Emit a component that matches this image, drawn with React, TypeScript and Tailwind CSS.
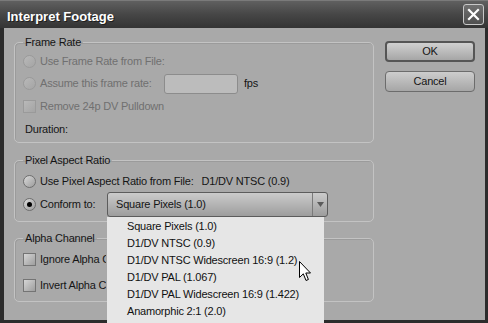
import React from "react";

const Radio = ({ checked = false, disabled = false }: { checked?: boolean; disabled?: boolean }) => (
  <span
    className={
      "w-[13px] h-[13px] rounded-full border flex items-center justify-center shrink-0 " +
      (disabled
        ? "border-[#9a9a9a] bg-linear-to-br from-[#b9b9b9] to-[#a4a4a4]"
        : "border-[#6e6e6e] bg-linear-to-br from-[#dadada] to-[#9c9c9c]")
    }
  >
    {checked && <span className="w-[5px] h-[5px] rounded-full bg-black" />}
  </span>
);

const Check = ({ disabled = false }: { disabled?: boolean }) => (
  <span
    className={
      "w-[13px] h-[13px] border shrink-0 " +
      (disabled
        ? "border-[#9a9a9a] bg-linear-to-br from-[#b9b9b9] to-[#a4a4a4]"
        : "border-[#747474] bg-linear-to-br from-[#d6d6d6] to-[#9e9e9e]")
    }
  />
);

const Group = ({ title, className, children }: { title: string; className: string; children: React.ReactNode }) => (
  <fieldset
    className={
      "border border-[#c3c3c3] rounded-[5px] px-[8px] shadow-[inset_1px_1px_0_#9b9b9b] " + className
    }
  >
    <legend className="px-[2px] leading-[14px] text-[#151515]">{title}</legend>
    {children}
  </fieldset>
);

const items = [
  "Square Pixels (1.0)",
  "D1/DV NTSC (0.9)",
  "D1/DV NTSC Widescreen 16:9 (1.2)",
  "D1/DV PAL (1.067)",
  "D1/DV PAL Widescreen 16:9 (1.422)",
  "Anamorphic 2:1 (2.0)",
];

export default function App() {
  return (
    <div className="w-[488px] h-[323px] overflow-hidden bg-[#2c2c2c] flex flex-col font-['Liberation_Sans',Arial,sans-serif] text-[11px] tracking-[-0.2px]">
      {/* title bar */}
      <div className="h-[28px] shrink-0 flex items-center justify-between pl-[7px] pr-[4px] border-t border-[#7a7a7a] bg-linear-to-b from-[#606060] via-[#464646] to-[#343434]">
        <span className="mt-[5px] text-[13px] font-bold tracking-normal text-white [text-shadow:1px_1px_0_#1e1e1e]">
          Interpret Footage
        </span>
        <button className="w-[21px] h-[21px] rounded-[3px] border border-[#c8c8c8] bg-linear-to-b from-[#707070] to-[#505050] flex items-center justify-center">
          <svg width="13" height="13" viewBox="0 0 13 13">
            <path d="M2 2 L11 11 M11 2 L2 11" stroke="#fff" strokeWidth="2.2" strokeLinecap="square" />
          </svg>
        </button>
      </div>

      {/* body */}
      <div className="flex-1 bg-[#a9a9a9] ml-[4px] mr-[3px] mb-[3px] flex pl-[10px] pr-[10px] pt-[7px] gap-[11px]">
        <div className="w-[360px] flex flex-col">
          <Group title="Frame Rate" className="pb-[1px]">
            <div className="mt-[1px] h-[22px] flex items-center gap-[4px] text-[#707070]">
              <Radio disabled />
              <span>Use Frame Rate from File:</span>
            </div>
            <div className="h-[23px] flex items-center gap-[4px] text-[#707070]">
              <Radio disabled />
              <span className="w-[120px]">Assume this frame rate:</span>
              <span className="w-[74px] h-[20px] rounded-[3px] border border-[#8c8c8c] bg-[#bcbcbc]" />
              <span className="ml-[2px] text-[#151515]">fps</span>
            </div>
            <div className="h-[23px] flex items-center gap-[4px] text-[#707070]">
              <Check disabled />
              <span>Remove 24p DV Pulldown</span>
            </div>
            <div className="h-[23px] flex items-center pl-[2px] text-[#151515]">Duration:</div>
          </Group>

          <Group title="Pixel Aspect Ratio" className="mt-[10px] pb-[4px]">
            <div className="mt-[3px] h-[22px] flex items-center gap-[4px] text-[#151515]">
              <Radio />
              <span>Use Pixel Aspect Ratio from File:</span>
              <span className="ml-[4px]">D1/DV NTSC (0.9)</span>
            </div>
            <div className="h-[25px] flex items-center gap-[4px] text-[#151515]">
              <Radio checked />
              <span className="w-[63px]">Conform to:</span>
              <div className="relative z-10">
                <div className="w-[221px] h-[25px] rounded-[3px] border border-[#5c5c5c] bg-linear-to-b from-[#cbcbcb] via-[#b4b4b4] to-[#9d9d9d] flex items-center">
                  <span className="flex-1 pl-[8px]">Square Pixels (1.0)</span>
                  <span className="w-[15px] h-full border-l border-[#7a7a7a] flex items-center justify-center">
                    <svg width="7" height="5" viewBox="0 0 7 5">
                      <path d="M0 0 H7 L3.5 5 Z" fill="#5a5a5a" />
                    </svg>
                  </span>
                </div>
                <div className="absolute left-0 top-full w-[217px] h-[106px] bg-[#e6e6e6] pt-[1px]">
                  {items.map((it) => (
                    <div key={it} className="h-[17px] flex items-center pl-[20px] text-[#111]">
                      {it}
                    </div>
                  ))}
                  <svg className="absolute left-[192px] top-[44px]" width="13" height="21" viewBox="0 0 13 21">
                    <path
                      d="M0.5 0.5 L0.5 16.5 L4.3 12.8 L7 19.5 L9.4 18.5 L6.8 12 L11.5 12 Z"
                      fill="#fff"
                      stroke="#000"
                      strokeWidth="1"
                      strokeLinejoin="miter"
                    />
                  </svg>
                </div>
              </div>
            </div>
          </Group>

          <Group title="Alpha Channel" className="mt-[9px] pb-[4px]">
            <div className="mt-[2px] h-[24px] flex items-center gap-[4px] text-[#151515]">
              <Check />
              <span className="w-[66px] overflow-hidden whitespace-nowrap">Ignore Alpha Channel</span>
            </div>
            <div className="mt-[2px] h-[24px] flex items-center gap-[4px] text-[#151515]">
              <Check />
              <span className="w-[66px] overflow-hidden whitespace-nowrap">Invert Alpha Channel</span>
            </div>
          </Group>
        </div>

        <div className="w-[90px] pt-[6px] flex flex-col gap-[9px]">
          <button className="h-[21px] rounded-[4px] border-2 border-[#555] bg-linear-to-b from-[#d0d0d0] to-[#a6a6a6] text-[#151515]">
            OK
          </button>
          <button className="h-[21px] rounded-[4px] border border-[#6c6c6c] bg-linear-to-b from-[#cdcdcd] to-[#a6a6a6] text-[#151515]">
            Cancel
          </button>
        </div>
      </div>
    </div>
  );
}
